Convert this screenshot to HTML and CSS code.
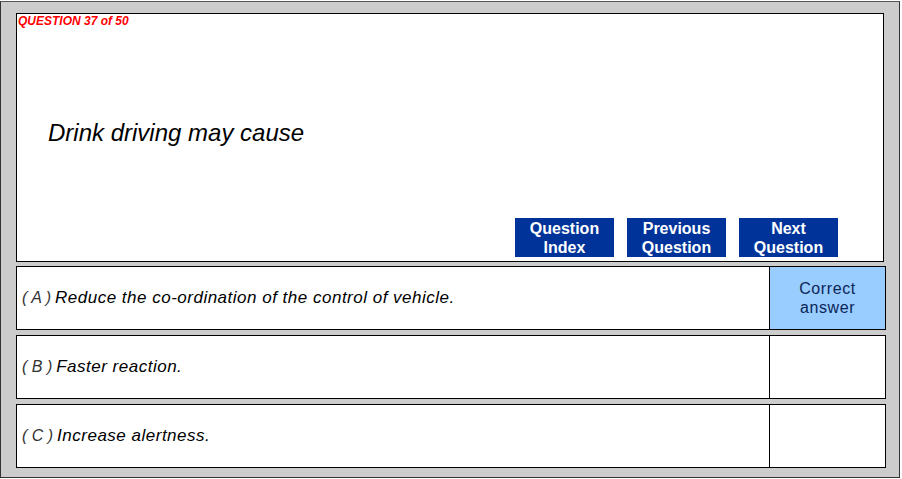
FILE: index.html
```html
<!DOCTYPE html>
<html lang="en">
<head>
    <meta charset="UTF-8">
    <title>Question 37 of 50</title>
    <link rel="stylesheet" href="styles.css">
</head>
<body>
    <!-- Quiz Frame -->
    <div class="quiz-frame">
        <!-- Question Panel -->
        <div class="question-panel">
            <div class="question-count">QUESTION 37 of 50</div>
            <div class="question-text">Drink driving may cause</div>
            <div class="nav-buttons">
                <button class="nav-btn">Question<br>Index</button>
                <button class="nav-btn">Previous<br>Question</button>
                <button class="nav-btn">Next<br>Question</button>
            </div>
        </div>
        <!-- Answers -->
        <div class="answer-row">
            <div class="answer-text"><span class="answer-letter">( A )</span> Reduce the co-ordination of the control of vehicle.</div>
            <div class="answer-mark correct">Correct<br>answer</div>
        </div>
        <div class="answer-row">
            <div class="answer-text"><span class="answer-letter">( B )</span> Faster reaction.</div>
            <div class="answer-mark"></div>
        </div>
        <div class="answer-row">
            <div class="answer-text"><span class="answer-letter">( C )</span> Increase alertness.</div>
            <div class="answer-mark"></div>
        </div>
    </div>
</body>
</html>
```

FILE: styles.css
```css
/* Global Styling */
body {
    margin: 0;
    background-color: #ffffff;
    font-family: "Liberation Sans", Arial, sans-serif;
}
/* Outer Frame */
.quiz-frame {
    box-sizing: border-box;
    width: 900px;
    height: 477px;
    margin-top: 1px;
    background-color: #cccccc;
    border: 1px solid #333333;
    border-top-color: #555555;
    padding: 11px 0 0 15px;
    display: flex;
    flex-direction: column;
}
/* Question Panel */
.question-panel {
    box-sizing: border-box;
    width: 868px;
    height: 249px;
    background-color: #ffffff;
    border: 1px solid #000000;
    display: flex;
    flex-direction: column;
}
.question-count {
    color: #ff0000;
    font-size: 12px;
    font-weight: bold;
    font-style: italic;
    line-height: 14px;
    margin: 0 0 0 1px;
}
.question-text {
    font-size: 24px;
    font-style: italic;
    line-height: 28px;
    color: #000000;
    margin: 91px 0 0 31px;
}
.nav-buttons {
    display: flex;
    gap: 13px;
    margin: 71px 0 0 498px;
}
.nav-btn {
    width: 99px;
    height: 39px;
    padding: 0;
    border: none;
    background-color: #003399;
    color: #ffffff;
    font-family: "Liberation Sans", Arial, sans-serif;
    font-size: 16px;
    font-weight: bold;
    line-height: 19px;
    cursor: pointer;
}
/* Answer Rows */
.answer-row {
    box-sizing: border-box;
    width: 870px;
    height: 64px;
    margin-top: 5px;
    background-color: #ffffff;
    border: 1px solid #000000;
    display: flex;
}
.question-panel + .answer-row {
    margin-top: 4px;
}
.answer-text {
    flex-grow: 1;
    display: flex;
    align-items: center;
    gap: 4px;
    padding-left: 5px;
    font-size: 17px;
    font-style: italic;
    letter-spacing: 0.5px;
    color: #000000;
}
.answer-letter {
    color: #333333;
    font-size: 16px;
    font-weight: 300;
    letter-spacing: 0;
}
.answer-mark {
    width: 115px;
    border-left: 1px solid #000000;
    display: flex;
    align-items: center;
    justify-content: center;
    text-align: center;
    font-size: 16px;
    line-height: 19px;
    letter-spacing: 0.6px;
    color: #0a2558;
}
.answer-mark.correct {
    background-color: #99ccff;
}
```
